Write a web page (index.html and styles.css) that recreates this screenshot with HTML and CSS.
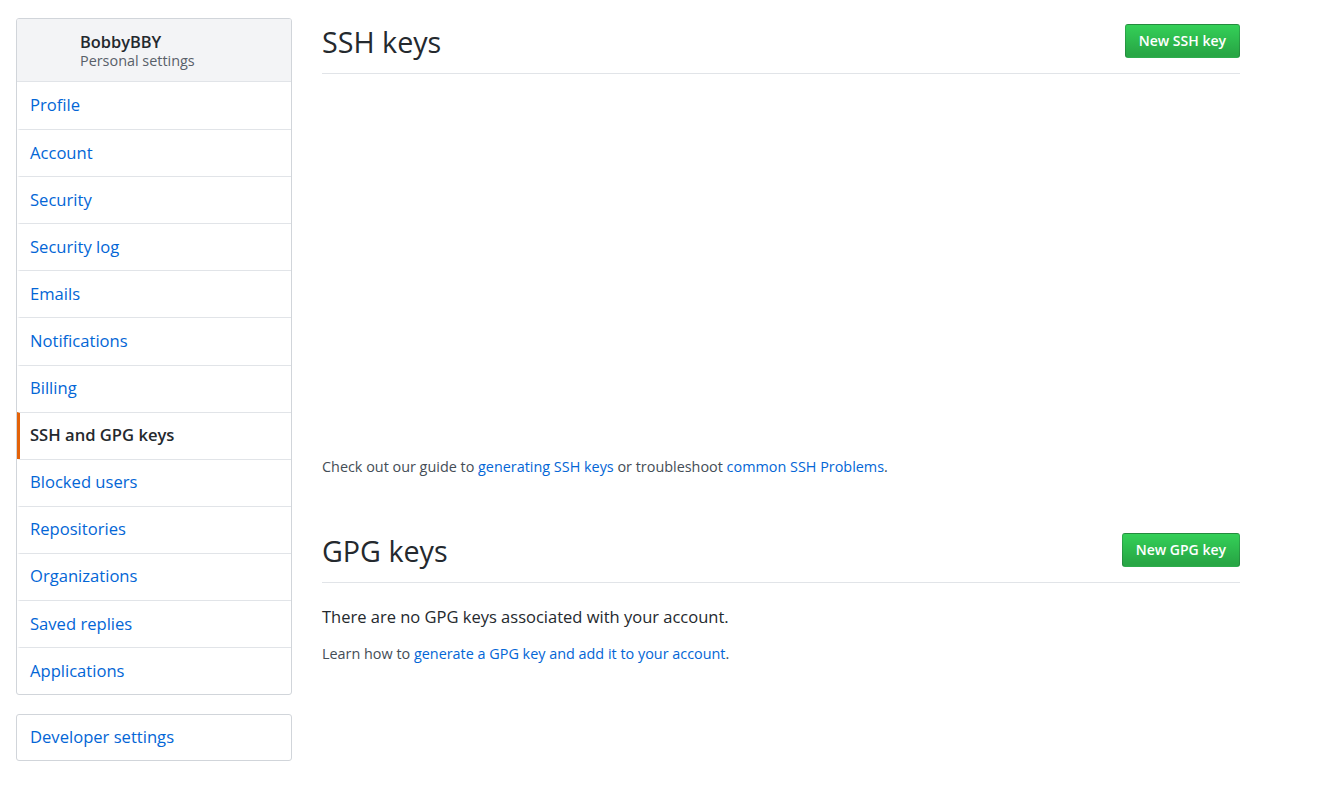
FILE: index.html
```html
<!DOCTYPE html>
<html>
<head>
<meta charset="utf-8">
<link rel="stylesheet" href="styles.css">
</head>
<body>
<div class="page">
  <aside class="sidebar">
    <nav class="menu">
      <div class="menu-header">
        <div class="menu-user">BobbyBBY</div>
        <div class="menu-sub">Personal settings</div>
      </div>
      <a class="menu-item" href="#">Profile</a>
      <a class="menu-item" href="#">Account</a>
      <a class="menu-item" href="#">Security</a>
      <a class="menu-item" href="#">Security log</a>
      <a class="menu-item" href="#">Emails</a>
      <a class="menu-item" href="#">Notifications</a>
      <a class="menu-item" href="#">Billing</a>
      <a class="menu-item selected" href="#">SSH and GPG keys</a>
      <a class="menu-item" href="#">Blocked users</a>
      <a class="menu-item" href="#">Repositories</a>
      <a class="menu-item" href="#">Organizations</a>
      <a class="menu-item" href="#">Saved replies</a>
      <a class="menu-item" href="#">Applications</a>
    </nav>
    <nav class="menu">
      <a class="menu-item dev" href="#">Developer settings</a>
    </nav>
  </aside>
  <main class="content">
    <div class="subhead">
      <h2 class="subhead-heading">SSH keys</h2>
      <a class="btn-primary" href="#">New SSH key</a>
    </div>
    <div class="ssh-empty"></div>
    <p class="note">Check out our guide to <a href="#">generating SSH keys</a> or troubleshoot <a href="#">common SSH Problems</a>.</p>

    <div class="subhead gpg">
      <h2 class="subhead-heading">GPG keys</h2>
      <a class="btn-primary" href="#">New GPG key</a>
    </div>
    <p class="empty-text">There are no GPG keys associated with your account.</p>
    <p class="note">Learn how to <a href="#">generate a GPG key and add it to your account</a>.</p>
  </main>
</div>
</body>
</html>
```

FILE: styles.css
```css
* { box-sizing: border-box; }
body {
  margin: 0;
  font-family: "Open Sans", "Noto Sans", sans-serif;
  color: #24292e;
  background: #fff;
}
a { color: #0366d6; text-decoration: none; }
.page {
  display: flex;
  gap: 30px;
  padding: 18px 16px;
  width: 1256px;
}
.sidebar {
  width: 276px;
  flex-shrink: 0;
  display: flex;
  flex-direction: column;
  gap: 19px;
}
.menu {
  display: flex;
  flex-direction: column;
  border: 1px solid #d1d5da;
  border-radius: 3px;
  overflow: hidden;
}
.menu-header {
  height: 63px;
  flex-shrink: 0;
  background: #f3f4f6;
  border-bottom: 1px solid #e1e4e8;
  padding: 13px 0 0 63px;
}
.menu-user {
  font-size: 16.4px;
  font-weight: 600;
  line-height: 20px;
}
.menu-sub {
  font-size: 14.4px;
  color: #586069;
  line-height: 18px;
}
.menu-item {
  height: 47.1px;
  flex-shrink: 0;
  display: flex;
  align-items: center;
  padding: 0 0 2px 10px;
  font-size: 16.6px;
  border-top: 1px solid #e1e4e8;
  border-left: 3px solid transparent;
}
.menu-header + .menu-item { border-top: 0; }
.menu > .menu-item:first-child { border-top: 0; }
.menu-item.dev { height: 45px; }
.menu-item.selected {
  color: #24292e;
  font-weight: 600;
  border-left-color: #e36209;
}
.content {
  width: 918px;
}
.subhead {
  display: flex;
  align-items: center;
  justify-content: space-between;
  border-bottom: 1px solid #e1e4e8;
  padding: 4px 0 11px;
}
.subhead-heading {
  margin: 0;
  font-size: 28.7px;
  font-weight: 400;
  line-height: 40px;
}
.btn-primary {
  display: inline-block;
  margin-bottom: 2px;
  color: #fff;
  font-size: 14px;
  font-weight: 600;
  line-height: 20px;
  padding: 6px 13px;
  border: 1px solid rgba(27,31,35,0.2);
  border-radius: 3px;
  background: linear-gradient(#34d058, #28a745 90%);
}
.ssh-empty { height: 383px; }
.note {
  margin: 0;
  font-size: 14.4px;
  color: #444d56;
}
.gpg { margin-top: 51px; }
.empty-text {
  margin: 22px 0 16px;
  font-size: 16.5px;
}
```
